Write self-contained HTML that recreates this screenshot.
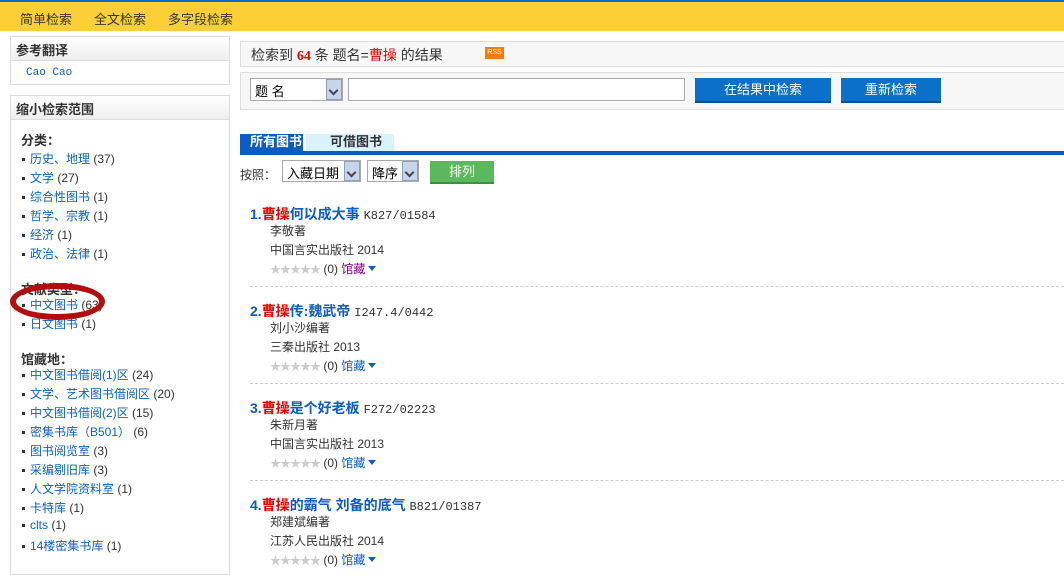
<!DOCTYPE html>
<html><head><meta charset="utf-8"><style>
*{margin:0;padding:0;box-sizing:border-box}
body{width:1064px;height:566px;overflow:hidden;background:#fff;font-family:"Liberation Sans","Noto Sans CJK SC","WenQuanYi Zen Hei",sans-serif;font-size:12px;color:#333;position:relative}
.a{position:absolute}
.top{left:0;top:0;width:1064px;height:31px;background:#fccf36;border-top:2px solid #0a6cc7}
.top span{position:absolute;top:7px;font-size:13px;color:#333}
.box{border:1px solid #ddd;background:#fff}
.bh{height:24px;background:linear-gradient(#fff,#eee);border-bottom:1px solid #ddd;font-weight:bold;font-size:13px;padding:3px 0 0 5px;color:#333}
.li{position:absolute;left:22px;font-size:12px;white-space:nowrap}
.li:before{content:"";display:inline-block;width:3px;height:3px;background:#333;margin-right:5px;vertical-align:middle}
.li b{color:#0b63c8;font-weight:normal}
.sec{position:absolute;left:21px;font-weight:bold;font-size:13px;color:#333}
.btn{position:absolute;background:#0b70c9;color:#fff;text-align:center;font-size:13px;line-height:24px;border-bottom:2px solid #0a4f96}
.sel{position:absolute;border:1px solid #aaa;background:#fff;font-size:13px;padding:2px 4px;color:#000}
.sel i{position:absolute;right:0;top:0;width:16px;height:100%;background:#c6d5ea;border:1px solid #8fa0bb}
.sel i:after{content:"";position:absolute;left:3px;top:7px;width:5px;height:5px;border-right:2px solid #445;border-bottom:2px solid #445;transform:rotate(45deg)}
.r{position:absolute;left:250px}
.t{font-size:14px;font-weight:bold;color:#0b5cc5;white-space:nowrap}
.t em{font-style:normal;color:#e00}
.t small{font-weight:normal;color:#333;font-size:12px;font-family:"Liberation Mono","WenQuanYi Zen Hei",monospace}
.st{color:#ccc;font-size:11px;letter-spacing:-1px}
.g{color:#0b5cc5}
.g:after{content:"";display:inline-block;margin-left:3px;border:4px solid transparent;border-top:5px solid #0b5cc5;vertical-align:middle;margin-top:2px}
.sep{position:absolute;left:250px;width:814px;border-top:1px dashed #ccc}
</style></head><body>
<div class="a top"><span style="left:20px">简单检索</span><span style="left:94px">全文检索</span><span style="left:168px">多字段检索</span></div>

<div class="a box" style="left:10px;top:36px;width:220px;height:49px"><div class="bh">参考翻译</div><div style="padding:6px 0 0 15px;color:#0b63c8;font-size:11px;font-family:'Liberation Mono',monospace">Cao Cao</div></div>
<div class="a box" style="left:10px;top:95px;width:220px;height:480px"><div class="bh">缩小检索范围</div></div>
<div class="sec" style="top:130px">分类：</div>
<div class="li" style="top:150px"><b>历史、地理</b> (37)</div>
<div class="li" style="top:169px"><b>文学</b> (27)</div>
<div class="li" style="top:188px"><b>综合性图书</b> (1)</div>
<div class="li" style="top:207px"><b>哲学、宗教</b> (1)</div>
<div class="li" style="top:226px"><b>经济</b> (1)</div>
<div class="li" style="top:245px"><b>政治、法律</b> (1)</div>
<div class="sec" style="top:279px">文献类型：</div>
<div class="li" style="top:296px"><b>中文图书</b> (63)</div>
<div class="li" style="top:315px"><b>日文图书</b> (1)</div>
<div class="a" style="left:10px;top:283px;width:95px;height:37px;border:6px solid #b30d0d;border-radius:50%"></div>
<div class="sec" style="top:349px">馆藏地：</div>
<div class="li" style="top:366px"><b>中文图书借阅(1)区</b> (24)</div>
<div class="li" style="top:385px"><b>文学、艺术图书借阅区</b> (20)</div>
<div class="li" style="top:404px"><b>中文图书借阅(2)区</b> (15)</div>
<div class="li" style="top:423px"><b>密集书库（B501）</b> (6)</div>
<div class="li" style="top:442px"><b>图书阅览室</b> (3)</div>
<div class="li" style="top:461px"><b>采编剔旧库</b> (3)</div>
<div class="li" style="top:480px"><b>人文学院资料室</b> (1)</div>
<div class="li" style="top:499px"><b>卡特库</b> (1)</div>
<div class="li" style="top:518px"><b>clts</b> (1)</div>
<div class="li" style="top:537px"><b>14楼密集书库</b> (1)</div>

<div class="a" style="left:240px;top:41px;width:830px;height:26px;background:#f7f7f7;border:1px solid #ddd;font-size:14px;padding:3px 0 0 10px;white-space:nowrap">检索到 <b style="color:#e00;font-family:'Liberation Serif',serif">64</b> 条 题名=<span style="color:#e00">曹操</span> 的结果</div>
<div class="a" style="left:485px;top:47px;width:19px;height:12px;background:#f47b10;color:#fff;font-size:7px;text-align:center;line-height:12px">RSS</div>
<div class="a" style="left:240px;top:72px;width:830px;height:38px;background:#f7f7f7;border:1px solid #ddd"></div>
<div class="sel" style="left:250px;top:78px;width:93px;height:23px">题 名<i></i></div>
<div class="a" style="left:348px;top:78px;width:337px;height:23px;border:1px solid #aaa;background:#fff"></div>
<div class="btn" style="left:695px;top:78px;width:136px;height:25px">在结果中检索</div>
<div class="btn" style="left:841px;top:78px;width:100px;height:25px">重新检索</div>

<div class="a" style="left:240px;top:134px;width:63px;height:19px;background:#0b5cc5;color:#fff;font-weight:bold;font-size:13px;padding-left:10px;line-height:16px">所有图书</div>
<div class="a" style="left:306px;top:134px;width:88px;height:19px;background:#d8f3fc;color:#333;font-weight:bold;font-size:13px;padding-left:24px;line-height:16px">可借图书</div>
<div class="a" style="left:240px;top:151px;width:830px;height:4px;background:#0b5cc5"></div>
<div class="a" style="left:240px;top:166px;font-size:12px">按照：</div>
<div class="sel" style="left:282px;top:160px;width:79px;height:22px">入藏日期<i></i></div>
<div class="sel" style="left:367px;top:160px;width:52px;height:22px">降序<i></i></div>
<div class="a" style="left:430px;top:161px;width:64px;height:23px;background:#5cb85c;color:#fff;font-size:13px;text-align:center;line-height:22px;border-bottom:2px solid #3f8f3f">排列</div>

<div class="r t" style="top:204px">1.<em>曹操</em>何以成大事 <small>K827/01584</small></div>
<div class="r" style="left:270px;top:222px">李敬著</div>
<div class="r" style="left:270px;top:241px">中国言实出版社 2014</div>
<div class="r" style="left:270px;top:260px"><span class="st">★★★★★</span> (0) <span class="g" style="color:#800080">馆藏</span></div>
<div class="sep" style="top:286px"></div>

<div class="r t" style="top:301px">2.<em>曹操</em>传:魏武帝 <small>I247.4/0442</small></div>
<div class="r" style="left:270px;top:319px">刘小沙编著</div>
<div class="r" style="left:270px;top:338px">三秦出版社 2013</div>
<div class="r" style="left:270px;top:357px"><span class="st">★★★★★</span> (0) <span class="g">馆藏</span></div>
<div class="sep" style="top:383px"></div>

<div class="r t" style="top:398px">3.<em>曹操</em>是个好老板 <small>F272/02223</small></div>
<div class="r" style="left:270px;top:416px">朱新月著</div>
<div class="r" style="left:270px;top:435px">中国言实出版社 2013</div>
<div class="r" style="left:270px;top:454px"><span class="st">★★★★★</span> (0) <span class="g">馆藏</span></div>
<div class="sep" style="top:480px"></div>

<div class="r t" style="top:495px">4.<em>曹操</em>的霸气 刘备的底气 <small>B821/01387</small></div>
<div class="r" style="left:270px;top:513px">郑建斌编著</div>
<div class="r" style="left:270px;top:532px">江苏人民出版社 2014</div>
<div class="r" style="left:270px;top:551px"><span class="st">★★★★★</span> (0) <span class="g">馆藏</span></div>
</body></html>
